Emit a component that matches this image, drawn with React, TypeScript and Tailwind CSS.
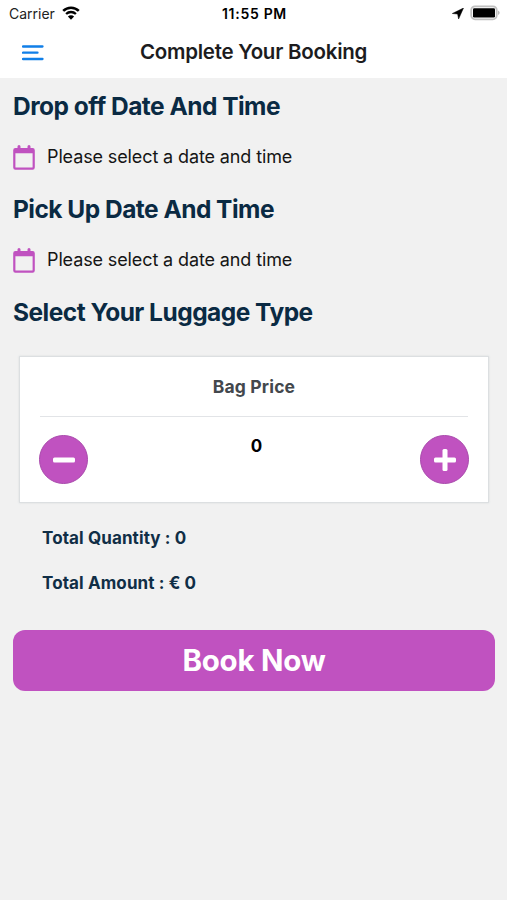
import React from "react";

function WifiIcon() {
  return (
    <svg width="18" height="14" viewBox="0 0 18 14" className="mb-[2px] ml-[7px] shrink-0">
      <path d="M1.2 4.9a11.2 11.2 0 0 1 15.6 0" fill="none" stroke="#000" strokeWidth="2.6" />
      <path d="M4.1 8a7 7 0 0 1 9.8 0" fill="none" stroke="#000" strokeWidth="2.3" />
      <path d="M9 13.8 5.9 10.6a4.4 4.4 0 0 1 6.2 0z" fill="#000" />
    </svg>
  );
}

function CalendarIcon() {
  return (
    <svg width="22" height="25" viewBox="0 0 22 25" className="shrink-0">
      <path
        fill="#c052c0"
        fillRule="evenodd"
        d="M2.4 3H4.500V1.500a1.500 1.500 0 0 1 3 0V3h7V1.500a1.500 1.500 0 0 1 3 0V3h2.100A2.200 2.200 0 0 1 21.800 5.200V22.600A2.200 2.200 0 0 1 19.600 24.800H2.400A2.200 2.200 0 0 1 .2 22.600V5.200A2.200 2.200 0 0 1 2.400 3ZM2.400 8.200V22a.6.6 0 0 0 .6.6H19a.6.6 0 0 0 .6-.6V8.200Z"
      />
    </svg>
  );
}

function Heading({ children, className }: { children: React.ReactNode; className: string }) {
  return (
    <h2 className={`h-8 whitespace-nowrap text-[24.500px] leading-8 font-bold tracking-[-0.520px] text-[#0a2a43] ${className}`}>
      <span>{children}</span>
    </h2>
  );
}

function DateRow({ className }: { className: string }) {
  return (
    <div className={`flex h-[26px] items-start ${className}`}>
      <CalendarIcon />
      <span className="ml-3 whitespace-nowrap text-lg leading-6 tracking-[-0.12px] text-[#151515]">
        Please select a date and time
      </span>
    </div>
  );
}

function RoundButton({ plus = false }: { plus?: boolean }) {
  return (
    <button
      aria-label={plus ? "Add bag" : "Remove bag"}
      className="flex size-[49px] items-center justify-center rounded-full border border-[#a94aac] bg-[#c052c0]"
    >
      <svg width="22" height="22" viewBox="0 0 22 22">
        <rect x="0" y="8.500" width="22" height="5" rx="1.500" fill="#fff" />
        {plus && <rect x="8.500" y="0" width="5" height="22" rx="1.500" fill="#fff" />}
      </svg>
    </button>
  );
}

export default function App() {
  return (
    <div className="flex h-[900px] w-[507px] flex-col overflow-hidden bg-[#f1f1f1] font-['Inter','Liberation_Sans',sans-serif]">
      <header className="h-[78px] shrink-0 bg-white">
        <div className="grid h-[27px] grid-cols-3 items-center pr-[7px] pl-[9px] text-sm text-black">
          <div className="flex items-center">
            <span className="text-[#222]">Carrier</span>
            <WifiIcon />
          </div>
          <span className="text-center font-semibold tracking-[0.700px] whitespace-nowrap">11:55 PM</span>
          <div className="flex items-center justify-end">
            <svg width="12" height="11" viewBox="0 0 12 11" className="mr-[6px]">
              <path d="M11.500 0 6.600 11 5.600 6 .3 5.500Z" fill="#000" stroke="#000" strokeWidth=".5" />
            </svg>
            <svg width="30" height="16" viewBox="0 0 30 16" className="mb-px">
              <rect x="1.200" y="1.300" width="25.500" height="13" rx="3.800" fill="#fff" stroke="#c0c0c0" strokeWidth="1.800" />
              <rect x="3" y="3.300" width="22" height="9.200" rx="1.200" fill="#000" />
              <path d="M28 5.500q1.700.8 1.700 2.300t-1.700 2.300Z" fill="#bcbcbc" />
            </svg>
          </div>
        </div>
        <div className="grid h-[51px] grid-cols-[118px_1fr_118px] items-center">
          <svg width="22" height="16" viewBox="0 0 22 16" className="ml-[22px]">
            <path d="M1 1.500H20.500M1 7.700H15.500M1 14H20.500" stroke="#117fe8" strokeWidth="2.300" strokeLinecap="round" />
          </svg>
          <h1 className="text-center text-[20.500px] font-semibold tracking-[-0.250px] whitespace-nowrap text-[#1c1c1e]">Complete Your Booking</h1>
        </div>
      </header>
      <main className="flex flex-col px-[13px] pt-[12px]">
        <Heading className="">Drop off Date And Time</Heading>
        <DateRow className="mt-[23px]" />
        <Heading className="mt-[22px]">Pick Up Date And Time</Heading>
        <DateRow className="mt-[23px]" />
        <Heading className="mt-[22px]">Select Your Luggage Type</Heading>
        <section className="mx-[6px] mt-[28px] h-[147px] w-[470px] border border-[#dcdfe1] bg-white px-[20px] shadow-[0_0_2px_#d8dcde]">
          <div className="flex h-[60px] items-center justify-center border-b border-[#e2e4e7] pt-px text-[17.500px] font-bold tracking-[0.150px] text-[#43484d]">
            <span>Bag Price</span>
          </div>
          <div className="-mx-px flex justify-between pt-[18px]">
            <RoundButton />
            <span className="-mt-px h-6 pl-[5px] text-[17px] leading-6 font-bold text-black">0</span>
            <RoundButton plus />
          </div>
        </section>
        <div className="mt-[23px] ml-[29px] flex flex-col gap-[21px] text-[17px] leading-6 font-bold tracking-[0.110px] text-[#102e46]">
          <p><span>Total Quantity : 0</span></p>
          <p><span>Total Amount : € 0</span></p>
        </div>
        <button className="mt-[35px] flex h-[61px] w-[482px] items-center justify-center rounded-xl bg-[#c052c0] text-[29.500px] font-bold tracking-[-0.250px] text-white">
          <span>Book Now</span>
        </button>
      </main>
    </div>
  );
}
